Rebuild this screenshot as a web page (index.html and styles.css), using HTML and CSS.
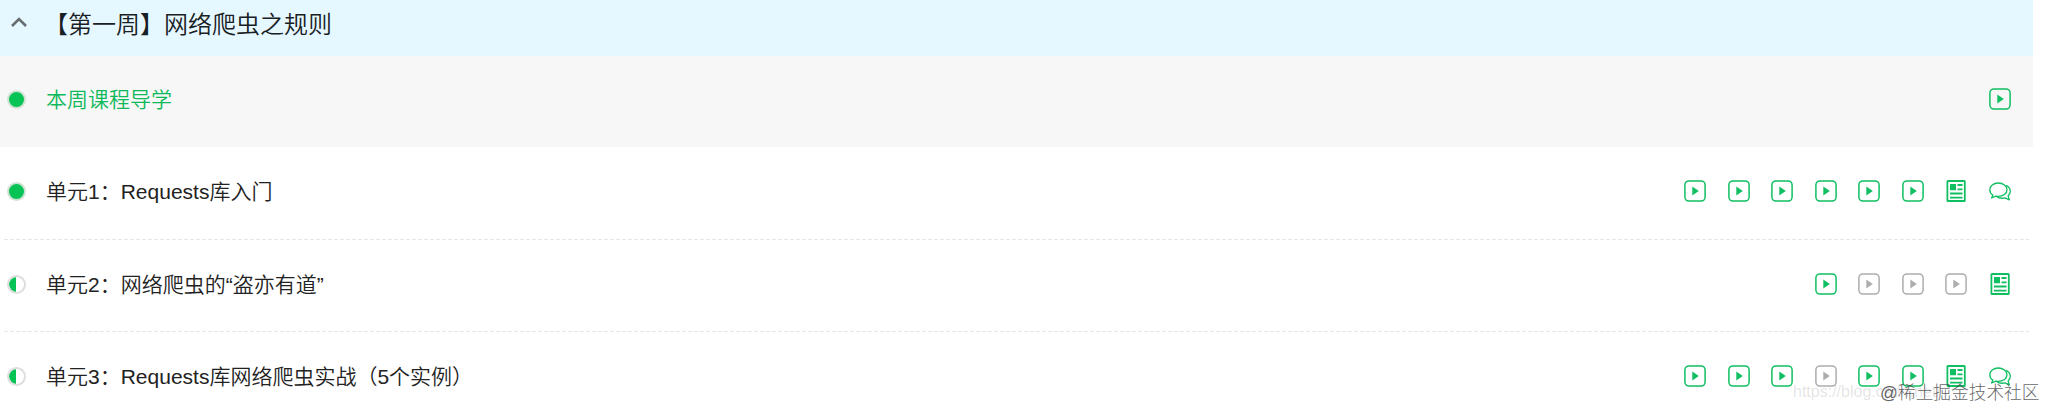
FILE: index.html
```html
<!DOCTYPE html>
<html lang="zh-CN">
<head>
<meta charset="utf-8">
<title>课程目录</title>
<link rel="stylesheet" href="styles.css">
</head>
<body>
<svg class="sprite" aria-hidden="true">
  <symbol id="play" viewBox="0 0 22 22"><rect x=".9" y=".9" width="20.2" height="20.2" rx="4" fill="none" stroke="currentColor" stroke-width="1.5"/><path d="M8.300 6.600v8.800l6.500-4.400z" fill="currentColor"/></symbol>
  <symbol id="news" viewBox="0 0 22 22"><rect x="2.400" y="1" width="17.400" height="20" rx=".6" fill="none" stroke="currentColor" stroke-width="1.800"/><path d="M5 4h6v6.200H5zM12.500 4h5v1.900h-5zM12.500 8.400h5v1.900h-5zM5 12.600h12.500v1.900H5zM5 16.700h12.500v1.900H5z" fill="currentColor"/></symbol>
  <symbol id="chat" viewBox="0 0 22 22"><g fill="none" stroke="currentColor" stroke-width="1.300" stroke-linejoin="round"><path d="M9.300 3C4.500 3 .8 6 .8 9.700c0 2.300 1.200 4.200 3.100 5.400L2.600 18l4.300-1.900c.8.200 1.600.3 2.400.3 4.800 0 8.700-3 8.700-6.700S14.100 3 9.300 3z"/><path d="M17 5.400c2.600 1.300 4.300 3.300 4.300 5.900 0 1.800-.8 3.400-2.200 4.600l1.200 3.900-4.200-1.900c-3.400.7-6.600.3-8.900-1.700"/></g></symbol>
</svg>
<main class="panel">
  <header class="week">
    <svg class="chevron" viewBox="0 0 18 12"><path d="M2 10l7-7 7 7" fill="none" stroke="currentColor" stroke-width="2.600"/></svg>
    <h1 class="week-title">【第一周】网络爬虫之规则</h1>
  </header>
  <section class="row active">
    <i class="dot full"></i><span class="name">本周课程导学</span>
    <div class="icons"><svg><use href="#play"/></svg></div>
  </section>
  <section class="row">
    <i class="dot full"></i><span class="name">单元1：Requests库入门</span>
    <div class="icons"><svg><use href="#play"/></svg><svg><use href="#play"/></svg><svg><use href="#play"/></svg><svg><use href="#play"/></svg><svg><use href="#play"/></svg><svg><use href="#play"/></svg><svg><use href="#news"/></svg><svg><use href="#chat"/></svg></div>
  </section>
  <section class="row ruled">
    <i class="dot half"></i><span class="name">单元2：网络爬虫的“盗亦有道”</span>
    <div class="icons"><svg><use href="#play"/></svg><svg class="todo"><use href="#play"/></svg><svg class="todo"><use href="#play"/></svg><svg class="todo"><use href="#play"/></svg><svg><use href="#news"/></svg></div>
  </section>
  <section class="row ruled">
    <i class="dot half"></i><span class="name">单元3：Requests库网络爬虫实战（5个实例）</span>
    <div class="icons"><svg><use href="#play"/></svg><svg><use href="#play"/></svg><svg><use href="#play"/></svg><svg class="todo"><use href="#play"/></svg><svg><use href="#play"/></svg><svg><use href="#play"/></svg><svg><use href="#news"/></svg><svg><use href="#chat"/></svg></div>
  </section>
</main>
<div class="mark source">https://blog.csdn.net/</div>
<div class="mark community">@稀土掘金技术社区</div>
</body>
</html>
```

FILE: styles.css
```css
* { box-sizing: border-box; }
body {
  margin: 0;
  height: 410px;
  overflow: hidden;
  position: relative;
  background: #fff;
  color: #222;
  font-family: "Liberation Sans", "Noto Sans CJK SC", sans-serif;
}
.sprite { display: none; }
.panel { width: 2033px; }
.week {
  display: flex;
  align-items: center;
  height: 56px;
  padding: 0 0 6px 10px;
  background: #e6f8ff;
}
.chevron { width: 18px; height: 12px; margin-bottom: 6px; color: #666d70; }
.week-title {
  margin: 0 0 0 16px;
  font-size: 24px;
  line-height: 36px;
  font-weight: 350;
  color: #182024;
}
.row {
  display: flex;
  align-items: center;
  height: 92px;
  padding: 0 22.500px 4px 7px;
}
.row.active { height: 91px; padding-bottom: 5px; background: #f7f7f7; color: #0eb95c; }
.row.ruled {
  padding-top: 1px;
  padding-bottom: 3px;
  background: repeating-linear-gradient(90deg, #e6e6e6 0 4px, transparent 4px 6px) 4px 0 / 2025px 1px no-repeat;
}
.dot {
  flex: none;
  width: 19px;
  height: 19px;
  border: 2px solid #dedede;
  border-radius: 50%;
}
.dot.full { background: #06c355; border-color: #cfe3d4; }
.dot.half { background: linear-gradient(90deg, #06c355 50%, #fff 50%) padding-box; }
.name {
  margin: 2px 0 0 20px;
  font-size: 21px;
  line-height: 30px;
  font-weight: 350;
  white-space: nowrap;
}
.icons { display: flex; gap: 21.500px; margin-left: auto; color: #10bf62; }
.icons svg { width: 22px; height: 22px; display: block; }
.icons .todo { color: #adadad; }
.mark { position: absolute; white-space: nowrap; }
.source { left: 1793px; top: 381px; font-size: 16px; line-height: 22px; color: rgba(120, 120, 120, .2); }
.community { left: 1880px; top: 380px; font-size: 17.700px; line-height: 27px; font-weight: 300; color: rgba(60, 60, 60, .8); }
```
